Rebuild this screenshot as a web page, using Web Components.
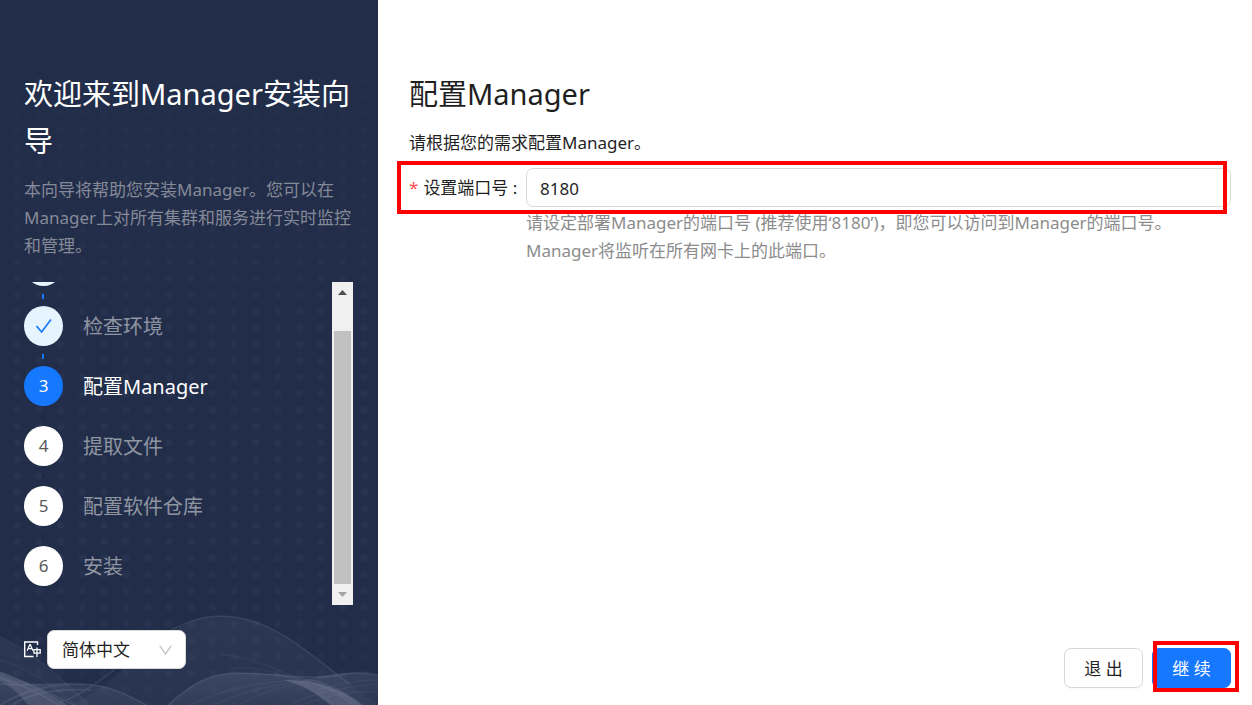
<!DOCTYPE html>
<html lang="zh-CN">
<head>
<meta charset="utf-8">
<meta name="viewport" content="width=device-width, initial-scale=1">
<title>Manager安装向导</title>
<style>
  body {
    margin: 0;
    font-family: "Noto Sans", "Noto Sans CJK SC", sans-serif;
    font-size: 17px;
    line-height: 28px;
    color: #1f1f1f;
    background: #fff;
  }
</style>
</head>
<body>
<install-wizard>
  <wizard-sidebar slot="side">
    <span slot="title">欢迎来到Manager安装向导</span>
    <span slot="intro">本向导将帮助您安装Manager。您可以在Manager上对所有集群和服务进行实时监控和管理。</span>
    <step-list slot="steps">
      <wizard-step number="1" state="done"></wizard-step>
      <wizard-step number="2" state="done">检查环境</wizard-step>
      <wizard-step number="3" state="active">配置Manager</wizard-step>
      <wizard-step number="4" state="wait">提取文件</wizard-step>
      <wizard-step number="5" state="wait">配置软件仓库</wizard-step>
      <wizard-step number="6" state="wait">安装</wizard-step>
    </step-list>
    <language-picker slot="language"></language-picker>
  </wizard-sidebar>
  <wizard-page>
    <span slot="title">配置Manager</span>
    <span slot="lead">请根据您的需求配置Manager。</span>
    <port-field value="8180">请设定部署Manager的端口号 (推荐使用‘8180’)，即您可以访问到Manager的端口号。Manager将监听在所有网卡上的此端口。</port-field>
    <wizard-button slot="actions">退 出</wizard-button>
    <wizard-button slot="actions" kind="primary" marked>继 续</wizard-button>
  </wizard-page>
</install-wizard>

<script>
const define = (name, html, setup) => {
  const template = document.createElement('template');
  template.innerHTML = html;
  customElements.define(name, class extends HTMLElement {
    connectedCallback() {
      if (this.shadowRoot) return;
      this.attachShadow({ mode: 'open' }).append(template.content.cloneNode(true));
      if (setup) setup(this, this.shadowRoot);
    }
  });
};

define('install-wizard', `
  <style>
    :host { display: flex; min-height: 100vh; }
    ::slotted(*) { min-width: 0; }
  </style>
  <slot name="side"></slot><slot></slot>`);

define('wave-backdrop', `
  <style>
    :host { display: block; position: absolute; inset: 0; overflow: hidden; background: #222d49; }
    svg { position: absolute; left: 0; bottom: 0; width: 100%; height: 705px; }
  </style>
  <svg viewBox="0 0 378 705" preserveAspectRatio="xMidYMax slice" aria-hidden="true">
    <defs>
      <pattern id="dots" x="6.5" y="7" width="21.7" height="16.45" patternUnits="userSpaceOnUse">
        <circle cx="10.8" cy="8.2" r="3.8" fill="#6f7fa8"/>
      </pattern>
      <linearGradient id="fade" x1="0" y1="0" x2="0" y2="1">
        <stop offset="0" stop-color="#fff" stop-opacity=".02"/>
        <stop offset=".3" stop-color="#fff" stop-opacity=".05"/>
        <stop offset=".7" stop-color="#fff" stop-opacity=".085"/>
        <stop offset="1" stop-color="#fff" stop-opacity=".05"/>
      </linearGradient>
      <mask id="m"><rect width="378" height="705" fill="url(#fade)"/></mask>
      <linearGradient id="hill" x1="0" y1="0" x2="0" y2="1">
        <stop offset="0" stop-color="#7f93a8" stop-opacity=".1"/>
        <stop offset="1" stop-color="#7f93a8" stop-opacity=".07"/>
      </linearGradient>
      <linearGradient id="front" x1="0" y1="0" x2="0" y2="1">
        <stop offset="0" stop-color="#9aa2bd" stop-opacity=".16"/>
        <stop offset="1" stop-color="#9aa2bd" stop-opacity=".08"/>
      </linearGradient>
    </defs>
    <rect width="378" height="705" fill="url(#dots)" mask="url(#m)"/>
    <path d="M70 705C120 685 165 616 220 616C275 616 315 660 350 684C362 693 372 701 378 705Z" fill="url(#hill)"/>
    <path d="M0 637C35 652 65 682 90 705H0Z" fill="url(#hill)"/>
    <path d="M168 705C188 688 205 673 238 673C280 673 300 677 320 681C345 690 355 700 365 705Z" fill="url(#front)"/>
    <path d="M0 673C30 690 60 683 84 684C110 685 130 696 146 705H0Z" fill="url(#front)"/>
    <path d="M300 681C320 676 345 669 378 675V705H350C338 694 320 684 300 681Z" fill="url(#front)"/>
    <path d="M0 672C22 680 45 690 68 705H28C20 694 10 686 0 681Z" fill="#a5aac0" opacity=".2"/>
    <path d="M284 680C310 680 340 686 362 705H330C318 694 302 685 284 680Z" fill="#a5aac0" opacity=".26"/>
    <g fill="none" stroke="#a9b1c8" stroke-width="1.6" opacity=".14">
      <path d="M60 702C105 690 160 616 220 616C275 616 315 660 350 684"/>
      <path d="M168 705C188 688 205 673 238 673C280 673 310 682 345 674C358 672 370 673 378 675"/>
      <path d="M0 684C35 687 60 682 84 684C110 685 130 696 146 705"/>
      <path d="M0 672C28 683 48 692 74 705M0 678C25 686 42 694 58 705"/>
      <path d="M0 705C25 690 50 684 84 684M12 705C30 693 55 688 92 690"/>
    </g>
    <g fill="none" stroke="#a9b1c8" stroke-width="1.6" opacity=".06">
      <path d="M0 637C35 652 65 682 90 705M0 660C30 668 55 688 76 705"/>
      <path d="M220 654C255 658 285 672 320 690M230 668C265 665 300 678 335 705"/>
      <path d="M190 705C225 688 265 680 310 680M215 705C240 692 270 684 310 681M240 705C255 695 280 686 310 682"/>
      <path d="M290 705C310 694 335 688 378 684M302 705C325 696 350 690 378 692M320 690C345 682 360 680 378 680"/>
    </g>
  </svg>`);

define('wizard-sidebar', `
  <style>
    :host { display: flex; position: relative; flex: 0 0 378px; box-sizing: border-box; height: 100vh; min-height: 600px; padding: 70px 25px 36px 24px; background: #222d49; }
    .content { position: relative; display: flex; flex-direction: column; flex: 1; min-width: 0; }
    h1 { margin: 0 0 12px; font-size: 29px; line-height: 47px; font-weight: 400; color: #fff; }
    p { margin: 0 0 22px; color: #858a98; }
    ::slotted(step-list) { flex: 1; min-height: 0; margin-bottom: 25px; }
  </style>
  <wave-backdrop></wave-backdrop>
  <div class="content">
    <h1><slot name="title"></slot></h1>
    <p><slot name="intro"></slot></p>
    <slot name="steps"></slot>
    <slot name="language"></slot>
  </div>`);

define('step-list', `
  <style>
    :host { display: flex; }
    .view { flex: 1; min-width: 0; display: flex; flex-direction: column; justify-content: flex-end; overflow: hidden; }
    ::slotted(:last-of-type) { flex-basis: 59px; }
    .bar { flex: 0 0 21px; box-sizing: border-box; display: flex; flex-direction: column; align-items: center; background: #f0f0f0; }
    .cap { flex: 0 0 21px; display: flex; align-items: center; justify-content: center; }
    .track { flex: 1; align-self: stretch; display: flex; align-items: flex-end; padding: 0 2px; }
    .thumb { width: 100%; height: 90%; background: #c1c1c1; }
    svg { display: block; }
  </style>
  <div class="view" role="list"><slot></slot></div>
  <div class="bar" aria-hidden="true">
    <div class="cap"><svg width="9" height="5" viewBox="0 0 9 5"><path d="M0 5L4.500 0L9 5Z" fill="#505050"/></svg></div>
    <div class="track"><div class="thumb"></div></div>
    <div class="cap"><svg width="9" height="5" viewBox="0 0 9 5"><path d="M0 0L4.500 5L9 0Z" fill="#a3a3a3"/></svg></div>
  </div>`);

define('wizard-step', `
  <style>
    :host { display: flex; flex: 0 0 60px; gap: 20px; font-size: 20px; line-height: 42px; color: #9095a2; }
    .rail { flex: 0 0 39px; display: flex; flex-direction: column; align-items: center; }
    .dot { box-sizing: border-box; width: 39px; height: 40px; border-radius: 50%; background: #fff; color: #595959; font-size: 17px; display: flex; justify-content: center; align-items: center; }
    .tail { width: 2px; height: 5px; margin: 8px 1px 0 0; background: #1d2740; }
    :host([state="done"]) .dot { background: #e6f4ff; }
    :host([state="done"]) .tail { background: #1677ff; }
    :host([state="active"]) .dot { background: #1677ff; color: #fff; }
    :host([state="active"]) { color: #fff; }
    :host(:last-of-type) .tail { visibility: hidden; }
  </style>
  <div class="rail"><div class="dot"></div><div class="tail"></div></div>
  <div><slot></slot></div>`, (host, root) => {
  host.setAttribute('role', 'listitem');
  const dot = root.querySelector('.dot');
  if (host.getAttribute('state') === 'done') {
    dot.innerHTML = '<svg width="18" height="16" viewBox="0 0 18 16" aria-hidden="true"><path d="M1.500 8L6.600 14L16 1.500" fill="none" stroke="#1677ff" stroke-width="1.700"/></svg>';
  } else {
    dot.textContent = host.getAttribute('number');
  }
});

define('language-picker', `
  <style>
    :host { display: flex; align-items: center; gap: 6px; }
    label { display: block; width: 17px; height: 17px; }
    svg { display: block; }
    .box { display: grid; align-items: center; width: 139px; }
    .box > * { grid-area: 1 / 1; }
    select { appearance: none; box-sizing: border-box; width: 100%; height: 39px; margin: 0; padding: 0 36px 0 14px; border: 1px solid #d9d9d9; border-radius: 7px; background: #fff; color: #1f1f1f; font: inherit; }
    .box svg { justify-self: end; margin-right: 14px; pointer-events: none; }
  </style>
  <label for="lang" aria-label="语言"><svg width="17" height="17" viewBox="0 0 17 17" fill="none" stroke="#fff">
    <path d="M13.500 4V1H.7V15.500H9.500" stroke-width="1.400"/>
    <path d="M3.200 9.800L5.800 3.600H6.300L8.900 9.800M4.200 7.700H7.900" stroke-width="1.300"/>
    <path d="M9.900 8.600H16.200V12.200H9.900ZM13 6.400V16" stroke-width="1.300"/>
  </svg></label>
  <div class="box">
    <select id="lang"><option selected>简体中文</option><option>English</option></select>
    <svg width="13" height="10" viewBox="0 0 13 10" aria-hidden="true"><path d="M.7.5L6.500 9L12.300.5" fill="none" stroke="#bfbfbf" stroke-width="1.300"/></svg>
  </div>`);

define('wizard-page', `
  <style>
    :host { display: flex; flex: 1; flex-direction: column; box-sizing: border-box; padding: 70px 21px 17px 31px; }
    h2 { margin: 0 0 12px; font-size: 29px; line-height: 47px; font-weight: 400; }
    p { margin: 0 0 11px; }
    main { flex: 1; }
    footer { display: flex; justify-content: flex-end; gap: 9px; }
  </style>
  <main>
    <h2><slot name="title"></slot></h2>
    <p><slot name="lead"></slot></p>
    <slot></slot>
  </main>
  <footer><slot name="actions"></slot></footer>`);

define('port-field', `
  <style>
    :host { display: grid; grid-template-columns: 117px 1fr; }
    .row { grid-column: 1 / -1; display: grid; grid-template-columns: subgrid; align-items: center; position: relative; }
    .mark { position: absolute; inset: -7px 4px -7px -12px; border: 4px solid #f00; pointer-events: none; z-index: 1; }
    label { display: flex; white-space: nowrap; }
    .star { color: #ff4d4f; margin-right: 5px; }
    input { box-sizing: border-box; width: 100%; height: 39px; margin: 0; padding: 1px 13px 0; border: 1px solid #d9d9d9; border-radius: 7px; background: #fff; color: inherit; font: inherit; outline: none; }
    .help { grid-column: 2; margin-top: 2px; max-width: 660px; color: #8c8c8c; }
  </style>
  <div class="row">
    <label for="port"><span class="star">*</span><span>设置端口号 :</span></label>
    <input id="port" type="text" inputmode="numeric" required aria-describedby="help">
    <div class="mark"></div>
  </div>
  <div class="help" id="help"><slot></slot></div>`, (host, root) => {
  root.querySelector('input').value = host.getAttribute('value');
});

define('wizard-button', `
  <style>
    :host { display: block; position: relative; }
    button { box-sizing: border-box; min-width: 79px; height: 40px; margin: 0; padding: 1px 17px 0; border: 1px solid #d9d9d9; border-radius: 7px; background: #fff; color: #1f1f1f; font: inherit; white-space: nowrap; box-shadow: 0 2px 0 rgba(0, 0, 0, .02); display: block; }
    :host([kind="primary"]) button { background: #1677ff; border-color: #1677ff; color: #fff; }
    .mark { display: none; position: absolute; inset: -7px -8px -4px 1px; border: 4px solid #f00; pointer-events: none; }
    :host([marked]) .mark { display: block; }
  </style>
  <button type="button"><slot></slot></button>
  <div class="mark"></div>`);
</script>
</body>
</html>
